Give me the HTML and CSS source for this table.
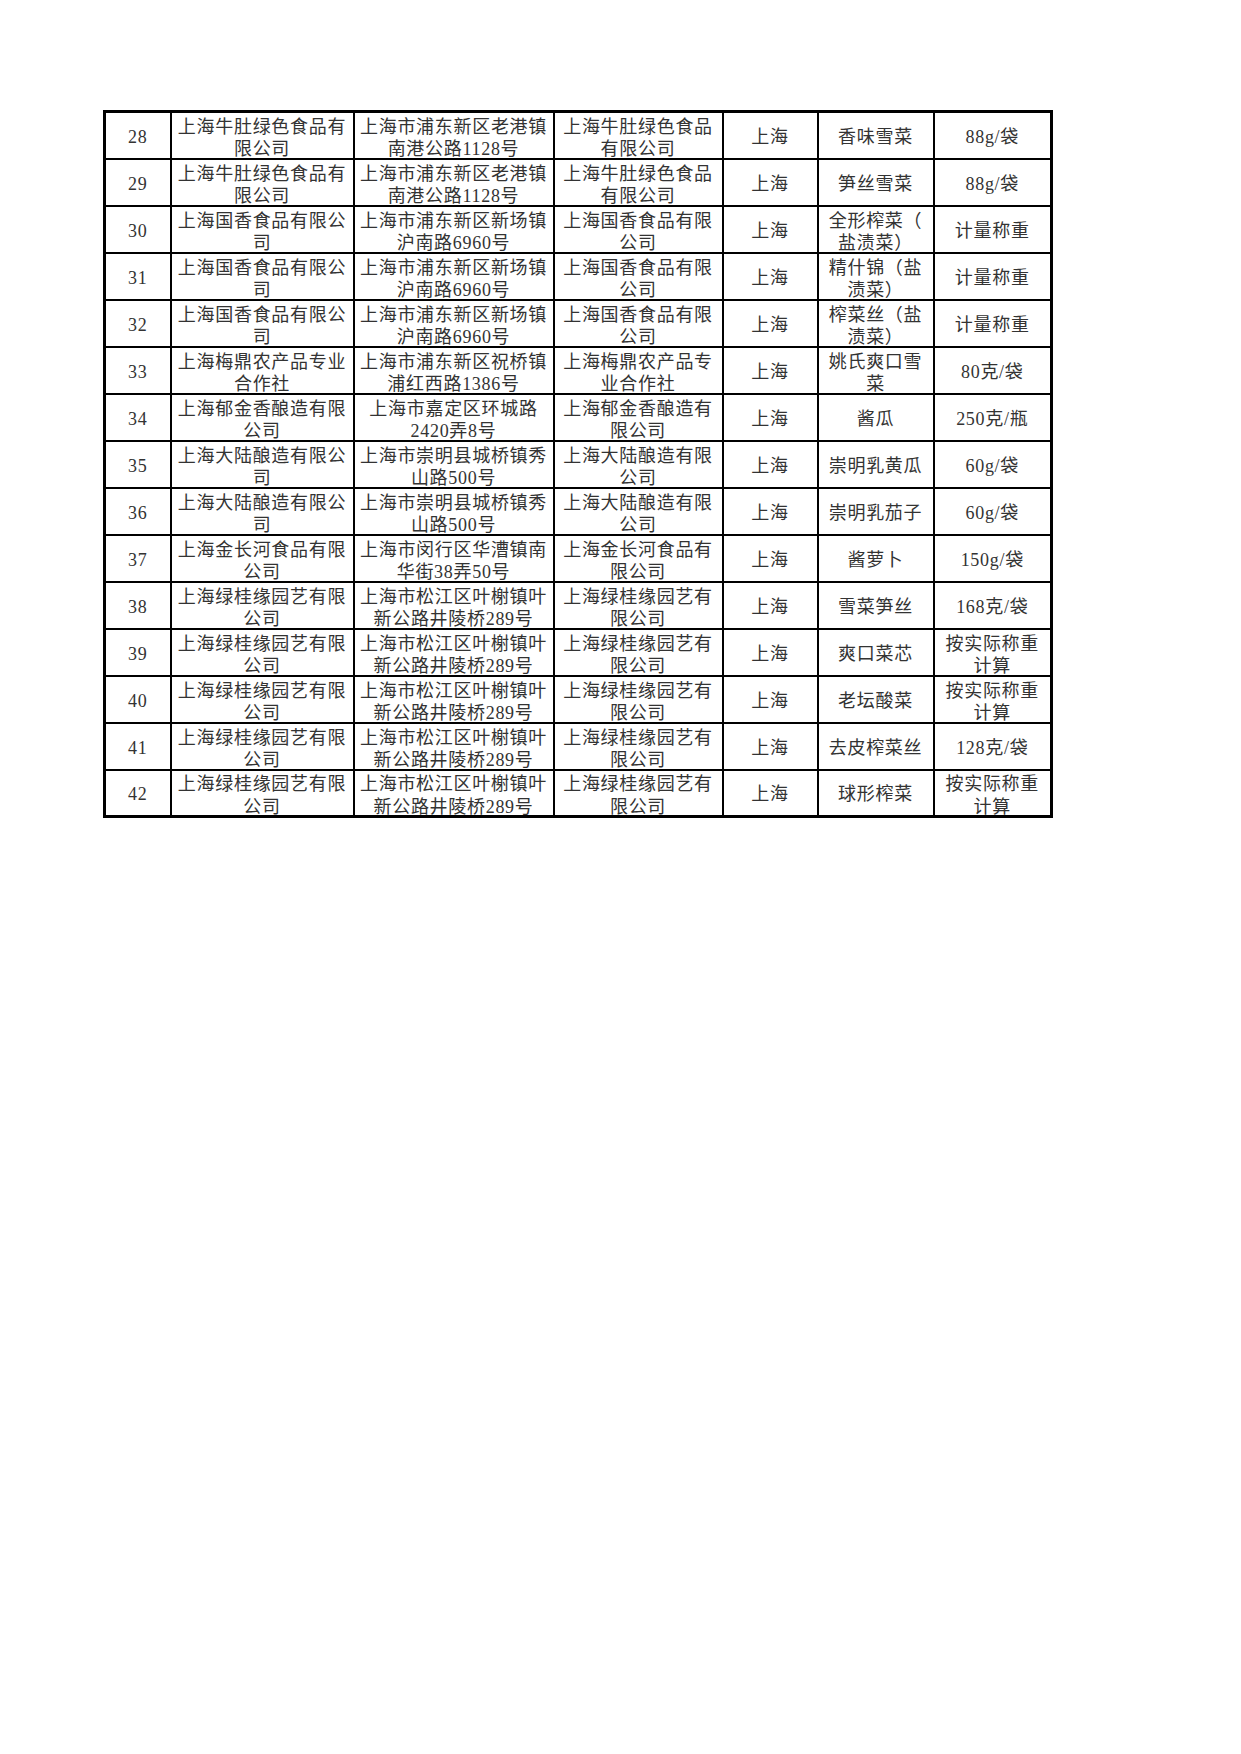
FILE: index.html
```html
<!DOCTYPE html>
<html lang="zh-CN">
<head>
<meta charset="utf-8">
<title>产品名单</title>
<link rel="stylesheet" href="styles.css">
</head>
<body>
<table class="sheet">
<colgroup>
<col class="c-no"><col class="c-maker"><col class="c-addr"><col class="c-brand"><col class="c-area"><col class="c-name"><col class="c-spec">
</colgroup>
<tbody>
<tr><td>28</td><td><span class="two">上海牛肚绿色食品有<br>限公司</span></td><td><span class="two">上海市浦东新区老港镇<br>南港公路1128号</span></td><td><span class="two">上海牛肚绿色食品<br>有限公司</span></td><td>上海</td><td>香味雪菜</td><td>88g/袋</td></tr>
<tr><td>29</td><td><span class="two">上海牛肚绿色食品有<br>限公司</span></td><td><span class="two">上海市浦东新区老港镇<br>南港公路1128号</span></td><td><span class="two">上海牛肚绿色食品<br>有限公司</span></td><td>上海</td><td>笋丝雪菜</td><td>88g/袋</td></tr>
<tr><td>30</td><td><span class="two">上海国香食品有限公<br>司</span></td><td><span class="two">上海市浦东新区新场镇<br>沪南路6960号</span></td><td><span class="two">上海国香食品有限<br>公司</span></td><td>上海</td><td><span class="two">全形榨菜（<br>盐渍菜）</span></td><td>计量称重</td></tr>
<tr><td>31</td><td><span class="two">上海国香食品有限公<br>司</span></td><td><span class="two">上海市浦东新区新场镇<br>沪南路6960号</span></td><td><span class="two">上海国香食品有限<br>公司</span></td><td>上海</td><td><span class="two">精什锦（盐<br>渍菜）</span></td><td>计量称重</td></tr>
<tr><td>32</td><td><span class="two">上海国香食品有限公<br>司</span></td><td><span class="two">上海市浦东新区新场镇<br>沪南路6960号</span></td><td><span class="two">上海国香食品有限<br>公司</span></td><td>上海</td><td><span class="two">榨菜丝（盐<br>渍菜）</span></td><td>计量称重</td></tr>
<tr><td>33</td><td><span class="two">上海梅鼎农产品专业<br>合作社</span></td><td><span class="two">上海市浦东新区祝桥镇<br>浦红西路1386号</span></td><td><span class="two">上海梅鼎农产品专<br>业合作社</span></td><td>上海</td><td><span class="two">姚氏爽口雪<br>菜</span></td><td>80克/袋</td></tr>
<tr><td>34</td><td><span class="two">上海郁金香酿造有限<br>公司</span></td><td><span class="two">上海市嘉定区环城路<br>2420弄8号</span></td><td><span class="two">上海郁金香酿造有<br>限公司</span></td><td>上海</td><td>酱瓜</td><td>250克/瓶</td></tr>
<tr><td>35</td><td><span class="two">上海大陆酿造有限公<br>司</span></td><td><span class="two">上海市崇明县城桥镇秀<br>山路500号</span></td><td><span class="two">上海大陆酿造有限<br>公司</span></td><td>上海</td><td>崇明乳黄瓜</td><td>60g/袋</td></tr>
<tr><td>36</td><td><span class="two">上海大陆酿造有限公<br>司</span></td><td><span class="two">上海市崇明县城桥镇秀<br>山路500号</span></td><td><span class="two">上海大陆酿造有限<br>公司</span></td><td>上海</td><td>崇明乳茄子</td><td>60g/袋</td></tr>
<tr><td>37</td><td><span class="two">上海金长河食品有限<br>公司</span></td><td><span class="two">上海市闵行区华漕镇南<br>华街38弄50号</span></td><td><span class="two">上海金长河食品有<br>限公司</span></td><td>上海</td><td>酱萝卜</td><td>150g/袋</td></tr>
<tr><td>38</td><td><span class="two">上海绿桂缘园艺有限<br>公司</span></td><td><span class="two">上海市松江区叶榭镇叶<br>新公路井陵桥289号</span></td><td><span class="two">上海绿桂缘园艺有<br>限公司</span></td><td>上海</td><td>雪菜笋丝</td><td>168克/袋</td></tr>
<tr><td>39</td><td><span class="two">上海绿桂缘园艺有限<br>公司</span></td><td><span class="two">上海市松江区叶榭镇叶<br>新公路井陵桥289号</span></td><td><span class="two">上海绿桂缘园艺有<br>限公司</span></td><td>上海</td><td>爽口菜芯</td><td><span class="two">按实际称重<br>计算</span></td></tr>
<tr><td>40</td><td><span class="two">上海绿桂缘园艺有限<br>公司</span></td><td><span class="two">上海市松江区叶榭镇叶<br>新公路井陵桥289号</span></td><td><span class="two">上海绿桂缘园艺有<br>限公司</span></td><td>上海</td><td>老坛酸菜</td><td><span class="two">按实际称重<br>计算</span></td></tr>
<tr><td>41</td><td><span class="two">上海绿桂缘园艺有限<br>公司</span></td><td><span class="two">上海市松江区叶榭镇叶<br>新公路井陵桥289号</span></td><td><span class="two">上海绿桂缘园艺有<br>限公司</span></td><td>上海</td><td>去皮榨菜丝</td><td>128克/袋</td></tr>
<tr><td>42</td><td><span class="two">上海绿桂缘园艺有限<br>公司</span></td><td><span class="two">上海市松江区叶榭镇叶<br>新公路井陵桥289号</span></td><td><span class="two">上海绿桂缘园艺有<br>限公司</span></td><td>上海</td><td>球形榨菜</td><td><span class="two">按实际称重<br>计算</span></td></tr>
</tbody>
</table>
</body>
</html>
```

FILE: styles.css
```css
html, body {
  margin: 0;
  padding: 0;
  background: #ffffff;
}

body {
  font-family: "Liberation Serif", "Noto Sans CJK SC", serif;
  color: #333333;
}

.sheet {
  margin: 110px 0 0 103px;
  border-collapse: collapse;
  table-layout: fixed;
  width: 948px;
  border: 3px solid #000;
}

.c-no { width: 66px; }
.c-maker { width: 183px; }
.c-addr { width: 200px; }
.c-brand { width: 169px; }
.c-area { width: 95px; }
.c-name { width: 116px; }
.c-spec { width: 118px; }

.sheet td {
  border: 2px solid #000;
  height: 47px;
  padding: 4px 0 0 0;
  box-sizing: border-box;
  text-align: center;
  vertical-align: middle;
  white-space: nowrap;
  font-size: 18px;
  letter-spacing: 0.7px;
  line-height: 23px;
}

.two {
  display: block;
  line-height: 22.5px;
  margin: -2px 0 -4px;
}
```
